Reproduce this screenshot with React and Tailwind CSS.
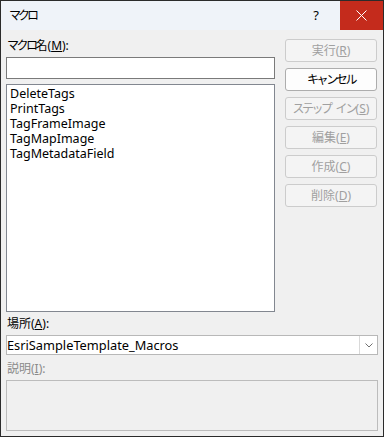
import React from "react";

const font = { fontFamily: '"Noto Sans", "Noto Sans CJK JP", sans-serif' };

// kana in the original font are narrower than Noto's full-width ones
function Kana({ children, t = "tracking-[-2px]" }) {
  return <span className={t}>{children}</span>;
}

function Btn({ children, mn, enabled = false }) {
  return (
    <div
      className={`h-[23px] w-[92px] rounded-[3px] border flex items-center justify-center text-[12px] leading-none whitespace-nowrap ${
        enabled ? "border-[#adadad] bg-[#fdfdfd] text-[#000]" : "border-[#cccccc] bg-[#f4f4f4] text-[#a0a0a0]"
      }`}
    >
      <span>
        {children}
        {mn && (
          <>
            (<span className="underline">{mn}</span>)
          </>
        )}
      </span>
    </div>
  );
}

export default function App() {
  const macros = ["DeleteTags", "PrintTags", "TagFrameImage", "TagMapImage", "TagMetadataField"];

  return (
    <div style={font} className="w-[384px] h-[437px] border border-[#2b2b2b] bg-[#f0f0f0] flex flex-col text-[#000] overflow-hidden">
      {/* title bar */}
      <div className="h-[29px] bg-[#eff3f9] flex items-center shrink-0">
        <div className="pl-[8px] text-[12px] flex-1">
          <Kana t="tracking-[-3px]">マクロ</Kana>
        </div>
        <div className="w-[44px] text-center text-[13px] mr-[2px]">?</div>
        <div className="w-[43px] h-[29px] bg-[#c42b1c] flex items-center justify-center">
          <svg width="11" height="11" viewBox="0 0 11 11">
            <path d="M0.5 0.5 L10.5 10.5 M10.5 0.5 L0.5 10.5" stroke="#fff" strokeWidth="1" />
          </svg>
        </div>
      </div>

      {/* body */}
      <div className="flex-1 flex flex-col px-[5px] pt-[8px]">
        <div className="flex">
          <div className="w-[269px] flex flex-col">
            <div className="text-[12px] leading-[16px] pl-[1px]">
              <Kana t="tracking-[-2.5px]">マクロ</Kana>名(<span className="underline">M</span>):
            </div>
            <div className="mt-[3px] h-[22px] border border-[#7a7a7a] bg-white" />
            <div className="mt-[5px] h-[228px] border border-[#828790] bg-white pl-[3px] pt-[1px] text-[12.5px] leading-[15px]">
              {macros.map((m) => (
                <div key={m} className="h-[15px] leading-[15px]">
                  {m}
                </div>
              ))}
            </div>
          </div>
          <div className="ml-[10px] pt-[1px] flex flex-col gap-[6px]">
            <Btn mn="R">実行</Btn>
            <Btn enabled>
              <Kana t="tracking-[-2.4px]">キャンセル</Kana>
            </Btn>
            <Btn mn="S">
              <Kana t="tracking-[-2.5px]">ステップ</Kana>
              <span className="ml-[5px]">
                <Kana t="tracking-[-2px]">イン</Kana>
              </span>
            </Btn>
            <Btn mn="E">編集</Btn>
            <Btn mn="C">作成</Btn>
            <Btn mn="D">削除</Btn>
          </div>
        </div>

        <div className="mt-[4px] text-[12px] leading-[16px] pl-[1px]">
          場所(<span className="underline">A</span>):
        </div>
        <div className="mt-[3px] h-[20px] w-[372px] border border-[#b8b8b8] bg-white flex items-center">
          <div className="flex-1 pl-0 text-[12.8px] leading-none">EsriSampleTemplate_Macros</div>
          <div className="w-[18px] h-[18px] border-l border-[#d9d9d9] flex items-center justify-center">
            <svg width="8" height="5" viewBox="0 0 8 5">
              <path d="M0.5 0.5 L4 4 L7.5 0.5" fill="none" stroke="#707070" strokeWidth="1" />
            </svg>
          </div>
        </div>
        <div className="mt-[6px] text-[12px] leading-[16px] pl-[1px] text-[#8a8a8a]">
          説明(<span className="underline">I</span>):
        </div>
        <div className="mt-[3px] h-[51px] w-[372px] border border-[#bcbcbc] bg-[#f0f0f0]" />
      </div>
    </div>
  );
}
